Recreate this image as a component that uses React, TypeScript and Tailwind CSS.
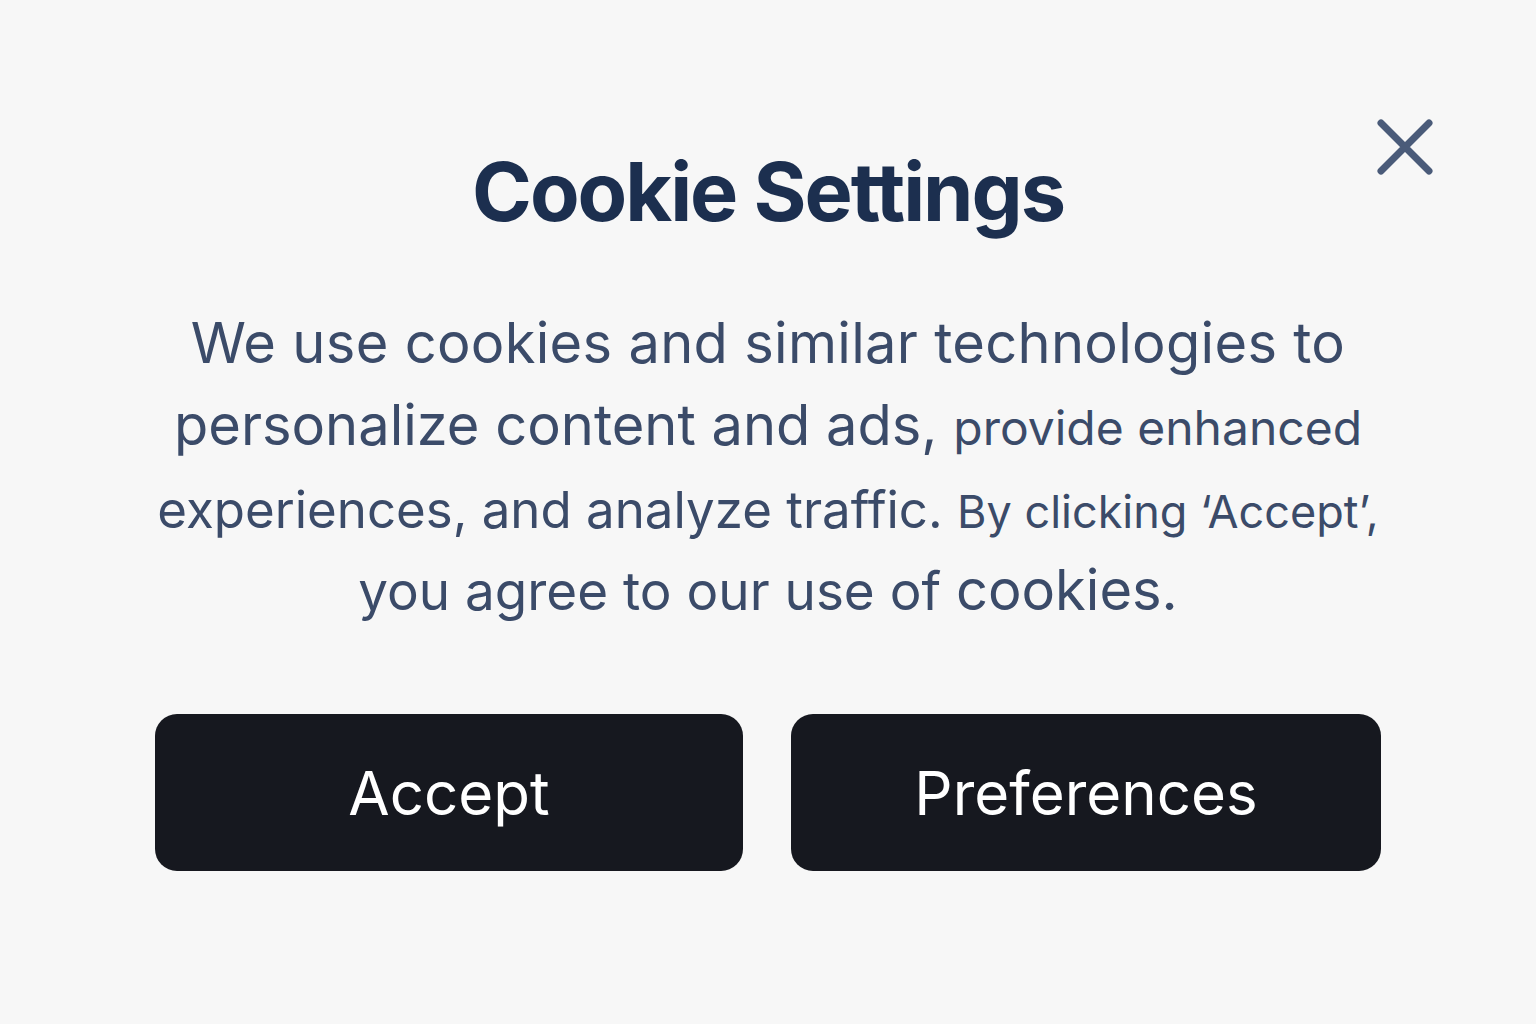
import React from "react";

const inter = { fontFamily: "Inter, 'Noto Sans', sans-serif" };

function CloseIcon() {
  return (
    <svg width="64" height="64" viewBox="0 0 64 64" fill="none">
      <path
        d="M8 8 L56 56 M56 8 L8 56"
        stroke="#4a5b79"
        strokeWidth="7"
        strokeLinecap="round"
      />
    </svg>
  );
}

export default function App() {
  return (
    <div
      className="relative min-h-screen w-full bg-[#f7f7f7] flex flex-col items-center pt-[151px]"
      style={inter}
    >
      {/* close button sits over the dialog corner */}
      <button className="absolute left-[1373px] top-[115px] p-0" aria-label="Close">
        <CloseIcon />
      </button>

      <h1 className="text-[81px] leading-[82px] font-bold tracking-tight text-[#1c2f4f]">
        Cookie Settings
      </h1>

      <div className="mt-[69px] flex flex-col items-center text-[#3b4b69] leading-[82px] text-center">
        <p className="text-[56px] tracking-[0.3px] whitespace-nowrap">
          We use cookies and similar technologies to
        </p>
        <p className="text-[56px] whitespace-nowrap">
          personalize content and ads, <span className="text-[48px]">provide enhanced</span>
        </p>
        <p className="text-[51px] whitespace-nowrap">
          experiences, and analyze traffic. <span className="text-[45px]">By clicking ‘Accept’,</span>
        </p>
        <p className="text-[53px] leading-[74px] whitespace-nowrap">
          you agree to our use of <span className="text-[56px]">cookies.</span>
        </p>
      </div>

      <div className="mt-[86px] flex gap-[48px]">
        <button className="w-[588px] h-[157px] rounded-[22px] bg-[#16181f] text-white text-[60px]">
          Accept
        </button>
        <button className="w-[590px] h-[157px] rounded-[22px] bg-[#16181f] text-white text-[60px]">
          Preferences
        </button>
      </div>
    </div>
  );
}
